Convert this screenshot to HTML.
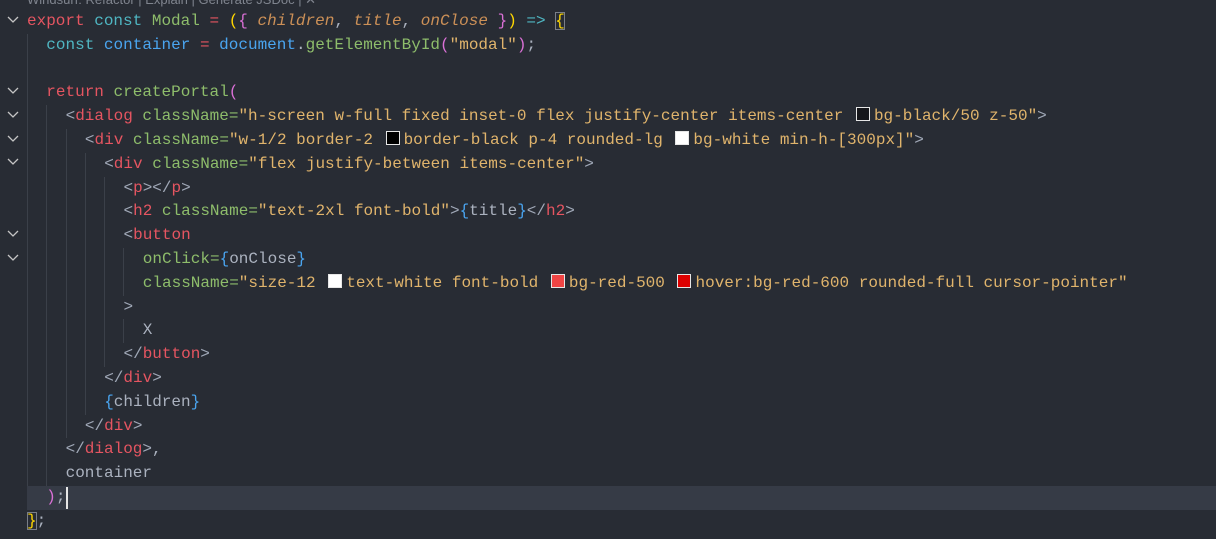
<!DOCTYPE html>
<html><head><meta charset="utf-8"><style>
html,body{margin:0;padding:0;background:#282c34;width:1216px;height:539px;overflow:hidden}
body{position:relative;font-family:"Liberation Mono",monospace;font-size:16px;color:#abb2bf}
.lens{position:absolute;left:27px;top:-8px;font-family:"Liberation Sans",sans-serif;font-size:13px;color:#7f848e;white-space:pre;line-height:16px}
.code{position:absolute;left:27px;top:10px;right:0}
.l{height:23.8px;line-height:23.8px;white-space:pre;position:relative}
.cur{background:#363b46}
.g{display:inline-block;width:19.3px;height:23.8px;vertical-align:top;box-shadow:inset 1px 0 #3b4049}
.k{color:#e55561}.c{color:#4fb6c2}.f{color:#8ebd6b}.p{color:#cc9057;font-style:italic}
.o{color:#e55561}.t{color:#e55561}.a{color:#8ebd6b}.s{color:#e0b46c}.b{color:#4aa5f0}
.v{color:#abb2bf}.n{color:#4aa5f0}.y{color:#ffd700}.m{color:#da70d6}
.pu{color:#a0a8b7}
.sw{display:inline-block;width:12px;height:12px;border:1px solid #e6e6e6;margin:0 4px 0 3px;vertical-align:-1px}
.box{outline:1px solid #7a7f88;outline-offset:-1px}
.caret{display:inline-block;width:2px;height:22px;background:#e6e6e6;vertical-align:top;margin-top:1px}
</style></head><body>
<div class="lens">Windsurf: Refactor | Explain | Generate JSDoc | ✕</div>
<svg width="30" height="539" style="position:absolute;left:0;top:0" fill="none" stroke="#c5c5c5" stroke-width="1.3">
<polyline points="8,17 13,22 18,17"/>
<polyline points="8,88 13,93 18,88"/>
<polyline points="8,112 13,117 18,112"/>
<polyline points="8,136 13,141 18,136"/>
<polyline points="8,159 13,164 18,159"/>
<polyline points="8,231 13,236 18,231"/>
<polyline points="8,255 13,260 18,255"/>
</svg>
<div class="code">
<div class="l"><span class="k">export</span> <span class="c">const</span> <span class="f">Modal</span> <span class="o">=</span> <span class="y">(</span><span class="m">{</span> <span class="p">children</span>, <span class="p">title</span>, <span class="p">onClose</span> <span class="m">}</span><span class="y">)</span> <span class="c">=&gt;</span> <span class="y box">{</span></div>
<div class="l"><span class="g"></span><span class="c">const</span> <span class="n">container</span> <span class="o">=</span> <span class="n">document</span>.<span class="f">getElementById</span><span class="m">(</span><span class="s">"modal"</span><span class="m">)</span>;</div>
<div class="l"><span class="g"></span></div>
<div class="l"><span class="g"></span><span class="k">return</span> <span class="f">createPortal</span><span class="m">(</span></div>
<div class="l"><span class="g"></span><span class="g"></span><span class="pu">&lt;</span><span class="t">dialog</span> <span class="a">className=</span><span class="s">"h-screen w-full fixed inset-0 flex justify-center items-center <span class="sw" style="background:#15161a"></span>bg-black/50 z-50"</span><span class="pu">&gt;</span></div>
<div class="l"><span class="g"></span><span class="g"></span><span class="g"></span><span class="pu">&lt;</span><span class="t">div</span> <span class="a">className=</span><span class="s">"w-1/2 border-2 <span class="sw" style="background:#000"></span>border-black p-4 rounded-lg <span class="sw" style="background:#fff"></span>bg-white min-h-[300px]"</span><span class="pu">&gt;</span></div>
<div class="l"><span class="g"></span><span class="g"></span><span class="g"></span><span class="g"></span><span class="pu">&lt;</span><span class="t">div</span> <span class="a">className=</span><span class="s">"flex justify-between items-center"</span><span class="pu">&gt;</span></div>
<div class="l"><span class="g"></span><span class="g"></span><span class="g"></span><span class="g"></span><span class="g"></span><span class="pu">&lt;</span><span class="t">p</span><span class="pu">&gt;&lt;/</span><span class="t">p</span><span class="pu">&gt;</span></div>
<div class="l"><span class="g"></span><span class="g"></span><span class="g"></span><span class="g"></span><span class="g"></span><span class="pu">&lt;</span><span class="t">h2</span> <span class="a">className=</span><span class="s">"text-2xl font-bold"</span><span class="pu">&gt;</span><span class="b">{</span><span class="v">title</span><span class="b">}</span><span class="pu">&lt;/</span><span class="t">h2</span><span class="pu">&gt;</span></div>
<div class="l"><span class="g"></span><span class="g"></span><span class="g"></span><span class="g"></span><span class="g"></span><span class="pu">&lt;</span><span class="t">button</span></div>
<div class="l"><span class="g"></span><span class="g"></span><span class="g"></span><span class="g"></span><span class="g"></span><span class="g"></span><span class="a">onClick=</span><span class="b">{</span><span class="v">onClose</span><span class="b">}</span></div>
<div class="l"><span class="g"></span><span class="g"></span><span class="g"></span><span class="g"></span><span class="g"></span><span class="g"></span><span class="a">className=</span><span class="s">"size-12 <span class="sw" style="background:#fff"></span>text-white font-bold <span class="sw" style="background:#ef4444"></span>bg-red-500 <span class="sw" style="background:#dc0000"></span>hover:bg-red-600 rounded-full cursor-pointer"</span></div>
<div class="l"><span class="g"></span><span class="g"></span><span class="g"></span><span class="g"></span><span class="g"></span><span class="pu">&gt;</span></div>
<div class="l"><span class="g"></span><span class="g"></span><span class="g"></span><span class="g"></span><span class="g"></span><span class="g"></span><span class="v">X</span></div>
<div class="l"><span class="g"></span><span class="g"></span><span class="g"></span><span class="g"></span><span class="g"></span><span class="pu">&lt;/</span><span class="t">button</span><span class="pu">&gt;</span></div>
<div class="l"><span class="g"></span><span class="g"></span><span class="g"></span><span class="g"></span><span class="pu">&lt;/</span><span class="t">div</span><span class="pu">&gt;</span></div>
<div class="l"><span class="g"></span><span class="g"></span><span class="g"></span><span class="g"></span><span class="b">{</span><span class="v">children</span><span class="b">}</span></div>
<div class="l"><span class="g"></span><span class="g"></span><span class="g"></span><span class="pu">&lt;/</span><span class="t">div</span><span class="pu">&gt;</span></div>
<div class="l"><span class="g"></span><span class="g"></span><span class="pu">&lt;/</span><span class="t">dialog</span><span class="pu">&gt;</span>,</div>
<div class="l"><span class="g"></span><span class="g"></span><span class="v">container</span></div>
<div class="l cur"><span class="g" style="box-shadow:none"></span><span class="m">)</span>;<span class="caret"></span></div>
<div class="l"><span class="y box">}</span>;</div>
</div>
</body></html>
